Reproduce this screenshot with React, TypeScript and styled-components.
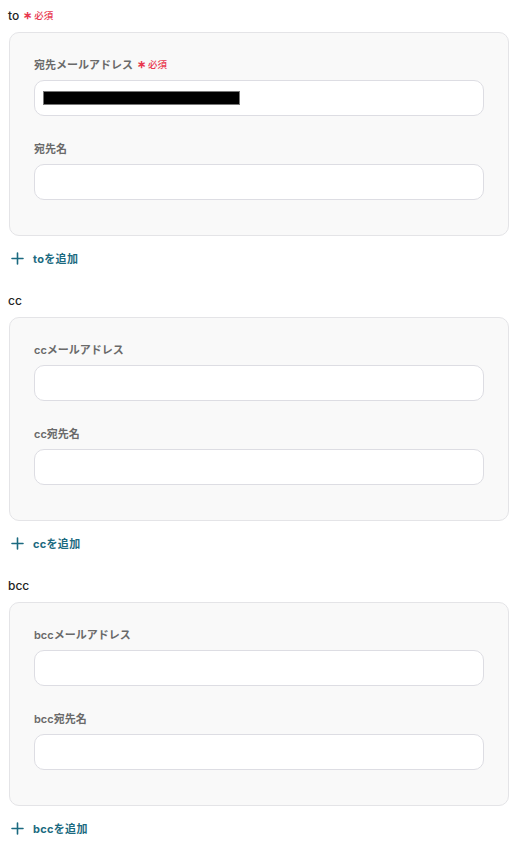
import React from 'react';
import styled, { createGlobalStyle } from 'styled-components';

const GlobalStyle = createGlobalStyle`
  body {
    margin: 0;
    background: #ffffff;
    font-family: 'Inter', 'Noto Sans CJK JP', sans-serif;
  }
`;

const Page = styled.div`
  display: flex;
  flex-direction: column;
  padding: 6px 11px 0 9px;
  width: 500px;
`;

const Section = styled.section`
  display: flex;
  flex-direction: column;
  margin-bottom: 23px;
`;

const SectionLabel = styled.div`
  display: flex;
  align-items: center;
  height: 18px;
  margin-left: -1px;
  margin-bottom: 8px;
  font-size: 12px;
  font-weight: 500;
  color: #222222;
`;

const Required = styled.span`
  display: inline-flex;
  align-items: center;
  margin-left: 4px;
  font-size: 9.5px;
  font-weight: 500;
  color: #e8384f;
`;

const Asterisk = styled.span`
  font-size: 11px;
  font-weight: 700;
  margin-right: 2px;
  line-height: 1;
`;

const Card = styled.div`
  display: flex;
  flex-direction: column;
  gap: 24px;
  padding: 23px 24px 35px 24px;
  background: #f9f9f9;
  border: 1px solid #e4e4e7;
  border-radius: 10px;
`;

const Field = styled.div`
  display: flex;
  flex-direction: column;
  gap: 8px;
`;

const FieldLabel = styled.label`
  display: flex;
  align-items: center;
  height: 16px;
  font-size: 11px;
  font-weight: 600;
  color: #6a6a6a;
`;

const InputBox = styled.div`
  display: flex;
  align-items: center;
  box-sizing: border-box;
  height: 36px;
  padding: 0 8px;
  background: #ffffff;
  border: 1px solid #dddde3;
  border-radius: 10px;
`;

const Redacted = styled.div`
  width: 197px;
  height: 14px;
  background: #000000;
  border: 1px solid #777;
  box-sizing: border-box;
`;

const AddButton = styled.button`
  display: flex;
  align-items: center;
  gap: 9px;
  height: 20px;
  margin-top: 12px;
  padding: 0 0 0 2px;
  background: none;
  border: none;
  font-family: inherit;
  font-size: 11px;
  font-weight: 700;
  letter-spacing: 0.3px;
  color: #1b6a80;
  cursor: pointer;
`;

const PlusIcon = () => (
  <svg width="13" height="13" viewBox="0 0 13 13">
    <path d="M6.5 1v11M1 6.5h11" stroke="#1b6a80" strokeWidth="1.6" strokeLinecap="round" />
  </svg>
);

const RequiredMark = () => (
  <Required>
    <Asterisk>∗</Asterisk>必須
  </Required>
);

interface FieldDef {
  label: string;
  required?: boolean;
  filled?: boolean;
}

interface SectionDef {
  key: string;
  required?: boolean;
  fields: FieldDef[];
}

const sections: SectionDef[] = [
  {
    key: 'to',
    required: true,
    fields: [
      { label: '宛先メールアドレス', required: true, filled: true },
      { label: '宛先名' },
    ],
  },
  {
    key: 'cc',
    fields: [{ label: 'ccメールアドレス' }, { label: 'cc宛先名' }],
  },
  {
    key: 'bcc',
    fields: [{ label: 'bccメールアドレス' }, { label: 'bcc宛先名' }],
  },
];

export default function App() {
  return (
    <>
      <GlobalStyle />
      <Page>
        {sections.map((s) => (
          <Section key={s.key}>
            <SectionLabel>
              {s.key}
              {s.required && <RequiredMark />}
            </SectionLabel>
            <Card>
              {s.fields.map((f) => (
                <Field key={f.label}>
                  <FieldLabel>
                    {f.label}
                    {f.required && <RequiredMark />}
                  </FieldLabel>
                  <InputBox>{f.filled && <Redacted />}</InputBox>
                </Field>
              ))}
            </Card>
            <AddButton>
              <PlusIcon />
              {s.key}を追加
            </AddButton>
          </Section>
        ))}
      </Page>
    </>
  );
}
